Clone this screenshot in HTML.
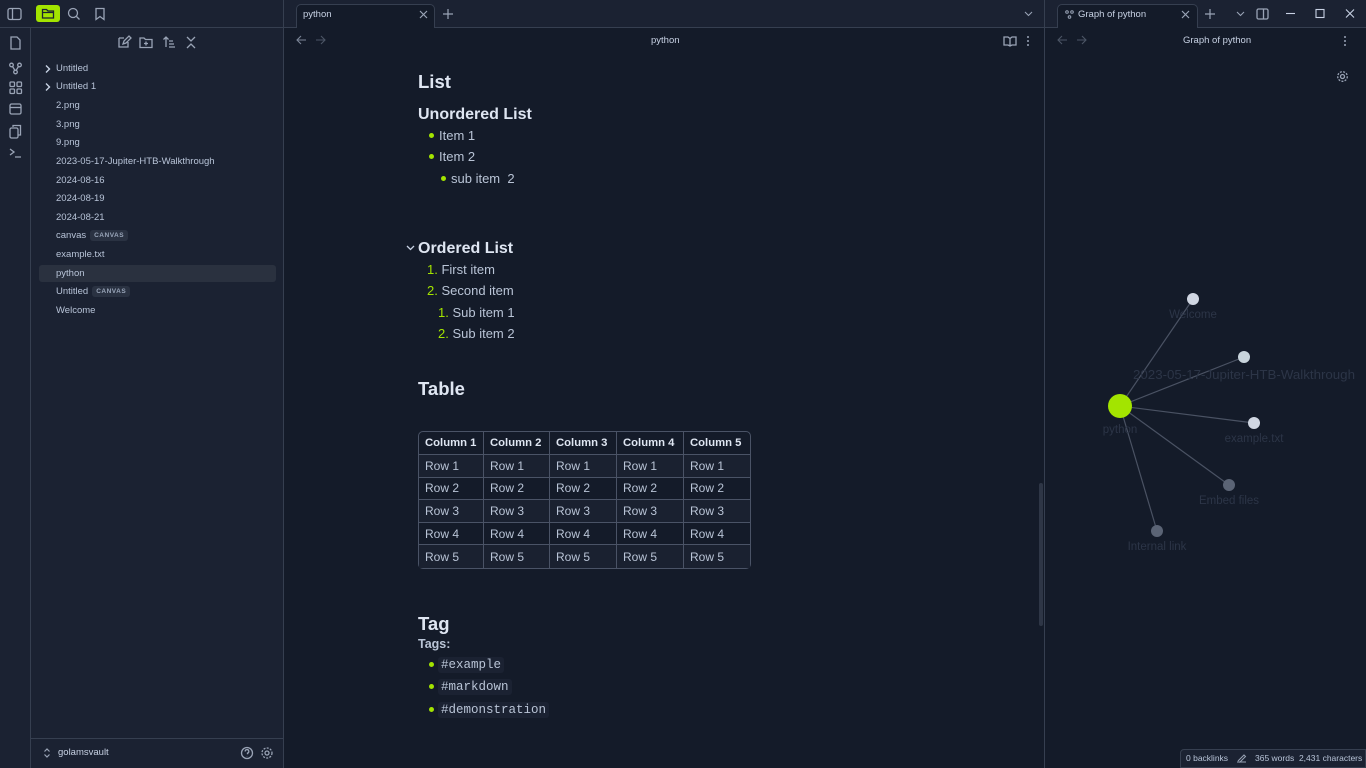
<!DOCTYPE html>
<html><head><meta charset="utf-8"><style>
*{margin:0;padding:0;box-sizing:border-box}
body{width:1366px;height:768px;overflow:hidden;background:#141b29;font-family:"Liberation Sans",sans-serif;color:#c8d2e4;position:relative}
.a{position:absolute;white-space:nowrap}
.side{background:#1b2232}
.ln{background:#363f50}
.ft{font-size:9.5px;color:#b8c4d8}
.ico{stroke:#9aa4b6;fill:none;stroke-width:1.3}
.c{font-size:13px;color:#b9c4d6}
.dot{position:absolute;width:5px;height:5px;border-radius:50%;background:#a3e400}
table{border-collapse:separate;border-spacing:0;border:1px solid #4a5366;border-radius:5px;font-size:12px;color:#b9c4d6;table-layout:fixed}
td,th{border-right:1px solid #4a5366;border-bottom:1px solid #4a5366;padding:0 6px;height:22.6px;text-align:left;white-space:nowrap;overflow:hidden}
th{font-weight:bold;color:#dfe6f2;height:23px;font-size:11.3px}
tr td:last-child,tr th:last-child{border-right:none}
tr:last-child td{border-bottom:none}
tr:nth-child(odd) td{background:#141b29}
tr:nth-child(even) td{background:#1a2130}
.tag{font-family:"Liberation Mono",monospace;font-size:12.5px;color:#b9c4d6;background:#1b2232;padding:1px 3px;border-radius:3px}
.badge{font-size:6.5px;font-weight:bold;background:#2a3242;color:#9aa6ba;padding:2px 4px;border-radius:3px;margin-left:4px;letter-spacing:.5px;vertical-align:1px}
.gl{font-size:11.5px;color:#2c3547;position:absolute;transform:translateX(-50%);white-space:nowrap}
</style></head><body>
<div class="a side" style="left:0;top:0;width:284px;height:768px"></div>
<div class="a side" style="left:284px;top:0;width:1082px;height:27px"></div>
<div class="a ln" style="left:0;top:27px;width:1366px;height:1px"></div>
<div class="a ln" style="left:30px;top:28px;width:1px;height:740px"></div>
<div class="a ln" style="left:283px;top:0;width:1px;height:768px"></div>
<div class="a ln" style="left:1044px;top:0;width:1px;height:768px"></div>
<svg class="a" style="left:7px;top:7px" width="16" height="14"><rect class="ico" x="1" y="1.5" width="13" height="11" rx="2"/><line class="ico" x1="5.5" y1="2" x2="5.5" y2="12"/></svg>
<div class="a" style="left:36px;top:5px;width:24px;height:17px;background:#a3e400;border-radius:3px"></div>
<svg class="a" style="left:41px;top:7px" width="14" height="13"><path d="M1.5 2.5h4l1.5 1.5h5.5v7h-11z M1.5 5.5h11" stroke="#1b2232" fill="none" stroke-width="1.3"/></svg>
<svg class="a" style="left:67px;top:7px" width="14" height="14"><circle class="ico" cx="6" cy="6" r="4.5"/><line class="ico" x1="9.5" y1="9.5" x2="12.5" y2="12.5"/></svg>
<svg class="a" style="left:94px;top:7px" width="12" height="14"><path class="ico" d="M2 1.5h8v11l-4-3-4 3z"/></svg>
<svg class="a" style="left:8px;top:35px" width="15" height="130">
<path class="ico" d="M3 2h6l3 3v9H3z"/>
<circle class="ico" cx="3.5" cy="30" r="1.8"/><circle class="ico" cx="11.5" cy="30" r="1.8"/><circle class="ico" cx="7.5" cy="37" r="1.8"/><path class="ico" d="M4.5 31.5l2.5 4M10.5 31.5l-2.5 4"/>
<rect class="ico" x="2" y="47" width="4.5" height="4.5" rx="1"/><rect class="ico" x="9" y="47" width="4.5" height="4.5" rx="1"/><rect class="ico" x="2" y="54" width="4.5" height="4.5" rx="1"/><rect class="ico" x="9" y="54" width="4.5" height="4.5" rx="1"/>
<rect class="ico" x="2" y="69" width="11" height="10" rx="1.5"/><line class="ico" x1="2" y1="72.5" x2="13" y2="72.5"/>
<rect class="ico" x="2" y="93" width="8" height="10" rx="1.5"/><path class="ico" d="M5 92V90.5h7.5v9.5H10"/>
<path class="ico" d="M2 114l4 3-4 3M7 122h6"/>
</svg>
<svg class="a" style="left:117px;top:35px" width="85" height="14">
<path class="ico" d="M2 3h5M2 3v9h9V7M6 9l1-3 5-5 2 2-5 5z"/>
<path class="ico" d="M23 3h4l1.5 1.5H35v8H23z M29 6.5v4M27 8.5h4"/>
<path class="ico" d="M49 12V2M46.5 4.5L49 2l2.5 2.5M52 6h4M52 9h5M52 12h6"/>
<path class="ico" d="M70 2l4 4 4-4M70 13l4-4 4 4"/>
</svg>
<svg class="a" style="left:44px;top:64px" width="8" height="10"><path d="M2 1.5l3.5 3.5L2 8.5" stroke="#c8d2e4" fill="none" stroke-width="1.4"/></svg>
<svg class="a" style="left:44px;top:82px" width="8" height="10"><path d="M2 1.5l3.5 3.5L2 8.5" stroke="#c8d2e4" fill="none" stroke-width="1.4"/></svg>
<div class="a" style="left:39px;top:265px;width:237px;height:17px;background:#2a313f;border-radius:3px"></div>
<div class="a ft" style="left:56px;top:63px">Untitled</div>
<div class="a ft" style="left:56px;top:81px">Untitled 1</div>
<div class="a ft" style="left:56px;top:100px">2.png</div>
<div class="a ft" style="left:56px;top:119px">3.png</div>
<div class="a ft" style="left:56px;top:137px">9.png</div>
<div class="a ft" style="left:56px;top:156px">2023-05-17-Jupiter-HTB-Walkthrough</div>
<div class="a ft" style="left:56px;top:175px">2024-08-16</div>
<div class="a ft" style="left:56px;top:193px">2024-08-19</div>
<div class="a ft" style="left:56px;top:212px">2024-08-21</div>
<div class="a ft" style="left:56px;top:230px">canvas<span class="badge">CANVAS</span></div>
<div class="a ft" style="left:56px;top:249px">example.txt</div>
<div class="a ft" style="left:56px;top:268px">python</div>
<div class="a ft" style="left:56px;top:286px">Untitled<span class="badge">CANVAS</span></div>
<div class="a ft" style="left:56px;top:305px">Welcome</div>
<div class="a ln" style="left:31px;top:738px;width:252px;height:1px"></div>
<svg class="a" style="left:43px;top:747px" width="8" height="12"><path d="M1.5 4.5L4 2l2.5 2.5M1.5 7.5L4 10l2.5-2.5" stroke="#9aa4b6" fill="none" stroke-width="1.2"/></svg>
<div class="a" style="left:58px;top:747px;font-size:9.5px;color:#c8d2e4">golamsvault</div>
<svg class="a" style="left:240px;top:746px" width="35" height="14"><circle class="ico" cx="7" cy="7" r="5.5"/><path class="ico" d="M5.2 5.5a1.8 1.8 0 1 1 2.3 1.6v1.2M7 10v.3"/><circle class="ico" cx="27" cy="7" r="2"/><circle class="ico" cx="27" cy="7" r="5" stroke-dasharray="2 1.3"/></svg>
<div class="a" style="left:296px;top:4px;width:139px;height:24px;background:#141b29;border:1px solid #363f50;border-bottom:none;border-radius:5px 5px 0 0"></div>
<div class="a" style="left:303px;top:9px;font-size:9.5px;color:#c8d2e4">python</div>
<svg class="a" style="left:419px;top:10px" width="9" height="9"><path d="M1 1l7 7M8 1L1 8" stroke="#9aa4b6" stroke-width="1.2"/></svg>
<svg class="a" style="left:443px;top:9px" width="10" height="10"><path d="M5 0v10M0 5h10" stroke="#9aa4b6" stroke-width="1.2"/></svg>
<svg class="a" style="left:1024px;top:11px" width="9" height="6"><path d="M1 1l3.5 3.5L8 1" stroke="#9aa4b6" fill="none" stroke-width="1.1"/></svg>
<svg class="a" style="left:296px;top:35px" width="35" height="10"><path d="M10 5H1M5 1L1 5l4 4" stroke="#7c8698" fill="none" stroke-width="1.1"/><path d="M20 5h9M25 1l4 4-4 4" stroke="#4c5566" fill="none" stroke-width="1.1"/></svg>
<div class="a" style="left:651px;top:35px;font-size:9.5px;color:#c8d2e4">python</div>
<svg class="a" style="left:1003px;top:35px" width="30" height="12"><path class="ico" d="M1 2h4l2 1.5L9 2h4v8H9l-2 1-2-1H1zM7 3.5v7"/><circle cx="25" cy="2" r="1" fill="#9aa4b6"/><circle cx="25" cy="6" r="1" fill="#9aa4b6"/><circle cx="25" cy="10" r="1" fill="#9aa4b6"/></svg>
<div class="a" style="left:418px;top:71px;font-size:18.5px;font-weight:bold;color:#dfe6f2">List</div>
<div class="a" style="left:418px;top:106px;font-size:16px;font-weight:bold;color:#dfe6f2">Unordered List</div>
<div class="dot" style="left:429px;top:133px"></div><div class="a c" style="left:439px;top:128px">Item 1</div>
<div class="dot" style="left:429px;top:154px"></div><div class="a c" style="left:439px;top:149px">Item 2</div>
<div class="dot" style="left:441px;top:176px"></div><div class="a c" style="left:451px;top:171px">sub item&nbsp; 2</div>
<svg class="a" style="left:406px;top:245px" width="9" height="6"><path d="M1 1l3.5 3.5L8 1" stroke="#c8d2e4" fill="none" stroke-width="1.3"/></svg>
<div class="a" style="left:418px;top:240px;font-size:16px;font-weight:bold;color:#dfe6f2">Ordered List</div>
<div class="a c" style="left:427px;top:262px"><span style="color:#a3e400">1.</span> First item</div>
<div class="a c" style="left:427px;top:283px"><span style="color:#a3e400">2.</span> Second item</div>
<div class="a c" style="left:438px;top:305px"><span style="color:#a3e400">1.</span> Sub item 1</div>
<div class="a c" style="left:438px;top:326px"><span style="color:#a3e400">2.</span> Sub item 2</div>
<div class="a" style="left:418px;top:378px;font-size:18.5px;font-weight:bold;color:#dfe6f2">Table</div>
<div class="a" style="left:418px;top:431px">
<table style="width:333px"><colgroup><col style="width:65px"><col style="width:66px"><col style="width:67px"><col style="width:67px"><col></colgroup><tr><th>Column 1</th><th>Column 2</th><th>Column 3</th><th>Column 4</th><th>Column 5</th></tr>
<tr><td>Row 1</td><td>Row 1</td><td>Row 1</td><td>Row 1</td><td>Row 1</td></tr>
<tr><td>Row 2</td><td>Row 2</td><td>Row 2</td><td>Row 2</td><td>Row 2</td></tr>
<tr><td>Row 3</td><td>Row 3</td><td>Row 3</td><td>Row 3</td><td>Row 3</td></tr>
<tr><td>Row 4</td><td>Row 4</td><td>Row 4</td><td>Row 4</td><td>Row 4</td></tr>
<tr><td>Row 5</td><td>Row 5</td><td>Row 5</td><td>Row 5</td><td>Row 5</td></tr></table></div>
<div class="a" style="left:418px;top:613px;font-size:18.5px;font-weight:bold;color:#dfe6f2">Tag</div>
<div class="a" style="left:418px;top:637px;font-size:12.5px;font-weight:bold;color:#b9c4d6">Tags:</div>
<div class="dot" style="left:429px;top:662px"></div><div class="a" style="left:438px;top:655px"><span class="tag">#example</span></div>
<div class="dot" style="left:429px;top:684px"></div><div class="a" style="left:438px;top:677px"><span class="tag">#markdown</span></div>
<div class="dot" style="left:429px;top:707px"></div><div class="a" style="left:438px;top:700px"><span class="tag">#demonstration</span></div>
<div class="a" style="left:1039px;top:483px;width:4px;height:143px;background:#2e3646;border-radius:2px"></div>
<div class="a" style="left:1057px;top:4px;width:141px;height:24px;background:#141b29;border:1px solid #363f50;border-bottom:none;border-radius:5px 5px 0 0"></div>
<svg class="a" style="left:1065px;top:10px" width="9" height="9"><circle cx="2" cy="2" r="1.3" stroke="#9aa4b6" fill="none"/><circle cx="7" cy="2" r="1.3" stroke="#9aa4b6" fill="none"/><circle cx="4.5" cy="7" r="1.3" stroke="#9aa4b6" fill="none"/></svg>
<div class="a" style="left:1078px;top:9px;font-size:9.5px;color:#c8d2e4">Graph of python</div>
<svg class="a" style="left:1181px;top:10px" width="9" height="9"><path d="M1 1l7 7M8 1L1 8" stroke="#9aa4b6" stroke-width="1.2"/></svg>
<svg class="a" style="left:1205px;top:9px" width="10" height="10"><path d="M5 0v10M0 5h10" stroke="#9aa4b6" stroke-width="1.2"/></svg>
<svg class="a" style="left:1236px;top:11px" width="9" height="6"><path d="M1 1l3.5 3.5L8 1" stroke="#9aa4b6" fill="none" stroke-width="1.1"/></svg>
<svg class="a" style="left:1256px;top:8px" width="13" height="12"><rect class="ico" x="1" y="1" width="11" height="10" rx="1.5"/><line class="ico" x1="7.5" y1="1" x2="7.5" y2="11"/></svg>
<svg class="a" style="left:1286px;top:8px" width="70" height="11"><path d="M0 5.5h9" stroke="#c8d2e4" stroke-width="1.1"/><rect x="30" y="1.5" width="8" height="8" stroke="#c8d2e4" fill="none" stroke-width="1.1"/><path d="M60 1.5l8 8M68 1.5l-8 8" stroke="#c8d2e4" stroke-width="1.1"/></svg>
<svg class="a" style="left:1057px;top:35px" width="35" height="10"><path d="M10 5H1M5 1L1 5l4 4" stroke="#4c5566" fill="none" stroke-width="1.1"/><path d="M20 5h9M25 1l4 4-4 4" stroke="#4c5566" fill="none" stroke-width="1.1"/></svg>
<div class="a" style="left:1183px;top:35px;font-size:9.5px;color:#c8d2e4">Graph of python</div>
<svg class="a" style="left:1343px;top:35px" width="4" height="12"><circle cx="2" cy="2" r="1" fill="#9aa4b6"/><circle cx="2" cy="6" r="1" fill="#9aa4b6"/><circle cx="2" cy="10" r="1" fill="#9aa4b6"/></svg>
<svg class="a" style="left:1336px;top:70px" width="13" height="13"><circle class="ico" cx="6.5" cy="6.5" r="2"/><circle class="ico" cx="6.5" cy="6.5" r="4.8" stroke-dasharray="2 1.3"/></svg>
<svg class="a" style="left:1045px;top:28px" width="321" height="720">
<g stroke="#4a5263" stroke-width="1.2">
<line x1="75" y1="378" x2="148" y2="271"/><line x1="75" y1="378" x2="199" y2="329"/><line x1="75" y1="378" x2="209" y2="395"/><line x1="75" y1="378" x2="184" y2="457"/><line x1="75" y1="378" x2="112" y2="503"/></g>
<circle cx="148" cy="271" r="6" fill="#d0d6e2"/><circle cx="199" cy="329" r="6" fill="#c8d4dc"/><circle cx="209" cy="395" r="6" fill="#d0d6e2"/><circle cx="184" cy="457" r="6" fill="#5b6475"/><circle cx="112" cy="503" r="6" fill="#5b6475"/>
<circle cx="75" cy="378" r="12" fill="#a3e400"/>
</svg>
<div class="gl" style="left:1193px;top:309px">Welcome</div>
<div class="gl" style="left:1244px;top:367px;font-size:13.3px">2023-05-17-Jupiter-HTB-Walkthrough</div>
<div class="gl" style="left:1120px;top:424px">python</div>
<div class="gl" style="left:1254px;top:433px">example.txt</div>
<div class="gl" style="left:1229px;top:495px">Embed files</div>
<div class="gl" style="left:1157px;top:541px">Internal link</div>
<div class="a" style="left:1180px;top:749px;width:186px;height:19px;background:#1b2232;border:1px solid #363f50;border-radius:4px 0 0 0"></div>
<div class="a" style="left:1186px;top:753px;font-size:8.5px;color:#b8c4d8">0 backlinks</div>
<div class="a" style="left:1255px;top:753px;font-size:8.5px;color:#b8c4d8">365 words&nbsp; 2,431 characters</div>
<svg class="a" style="left:1236px;top:753px" width="11" height="10"><path d="M1 9h9M2 8l6-6 1.5 1.5-6 6" stroke="#9aa4b6" fill="none" stroke-width="1"/></svg>
</body></html>
